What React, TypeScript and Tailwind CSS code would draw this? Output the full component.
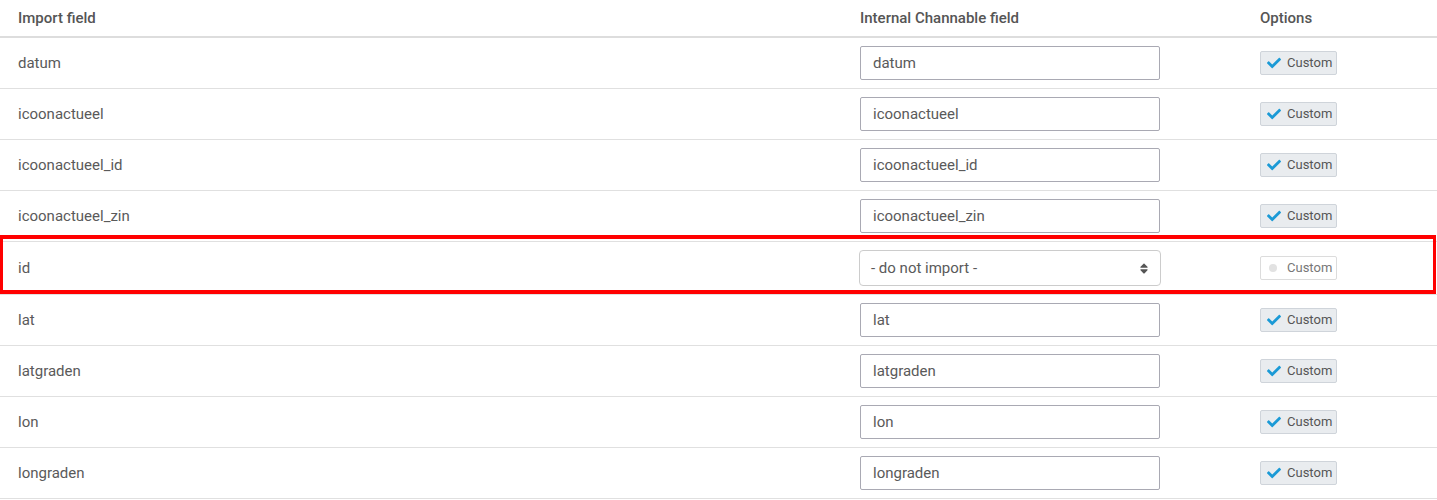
import React from "react";
import { FaCheck, FaSort } from "react-icons/fa";

type Row = { name: string; mapped: string | null };

const rows: Row[] = [
    { name: "datum", mapped: "datum" },
    { name: "icoonactueel", mapped: "icoonactueel" },
    { name: "icoonactueel_id", mapped: "icoonactueel_id" },
    { name: "icoonactueel_zin", mapped: "icoonactueel_zin" },
    { name: "id", mapped: null },
    { name: "lat", mapped: "lat" },
    { name: "latgraden", mapped: "latgraden" },
    { name: "lon", mapped: "lon" },
    { name: "longraden", mapped: "longraden" },
];

const CustomButton = ({ active }: { active: boolean }) =>
    active ? (
        <button className="flex items-center h-[24px] w-[77px] pl-[6px] rounded-[2px] border border-[#cfd4da] bg-[#e9ecef] text-[13px] text-[#555]">
            <FaCheck className="text-[#1b9ad6] w-[14px] h-[14px] mr-[6px]" />
            Custom
        </button>
    ) : (
        <button className="flex items-center h-[24px] w-[77px] pl-[8px] rounded-[2px] border border-[#dcdcdc] bg-white text-[13px] text-[#777]">
            <span className="w-[8px] h-[8px] rounded-full bg-[#e2e2e2] mr-[10px]" />
            Custom
        </button>
    );

export default function App() {
    return (
        <div className="w-[1437px] bg-white text-[15px] text-[#5a5a5a]" style={{ fontFamily: "Roboto, 'Liberation Sans', sans-serif" }}>
            {/* Header */}
            <div className="flex items-center h-[38px] border-b-2 border-[#dddddd] font-medium text-[#555]">
                <div className="w-[860px] pl-[18px]">Import field</div>
                <div className="w-[400px]">Internal Channable field</div>
                <div className="flex-1">Options</div>
            </div>

            {rows.map((r) => {
                const off = r.mapped === null;
                return (
                    <div
                        key={r.name}
                        className={`relative flex items-center border-b border-[#e0e0e0] ${off ? "h-[53px]" : "h-[51px]"}`}
                    >
                        <div className="w-[860px] pl-[18px]">{r.name}</div>
                        <div className="w-[400px]">
                            {off ? (
                                <div className="-ml-px flex items-center justify-between w-[302px] h-[36px] px-[11px] rounded-[4px] border border-[#cccccc] bg-white">
                                    <span>- do not import -</span>
                                    <FaSort className="w-[10px] h-[13px] text-[#555]" />
                                </div>
                            ) : (
                                <div className="flex items-center w-[300px] h-[34px] pl-[12px] rounded-[2px] border border-[#a9a9b3] bg-white">
                                    {r.mapped}
                                </div>
                            )}
                        </div>
                        <div className="flex-1">
                            <CustomButton active={!off} />
                        </div>
                        {off && (
                            <div className="absolute left-0 right-px top-[-7px] h-[59px] border-y-4 border-x-[3px] border-[#ff0000] pointer-events-none" />
                        )}
                    </div>
                );
            })}
        </div>
    );
}
